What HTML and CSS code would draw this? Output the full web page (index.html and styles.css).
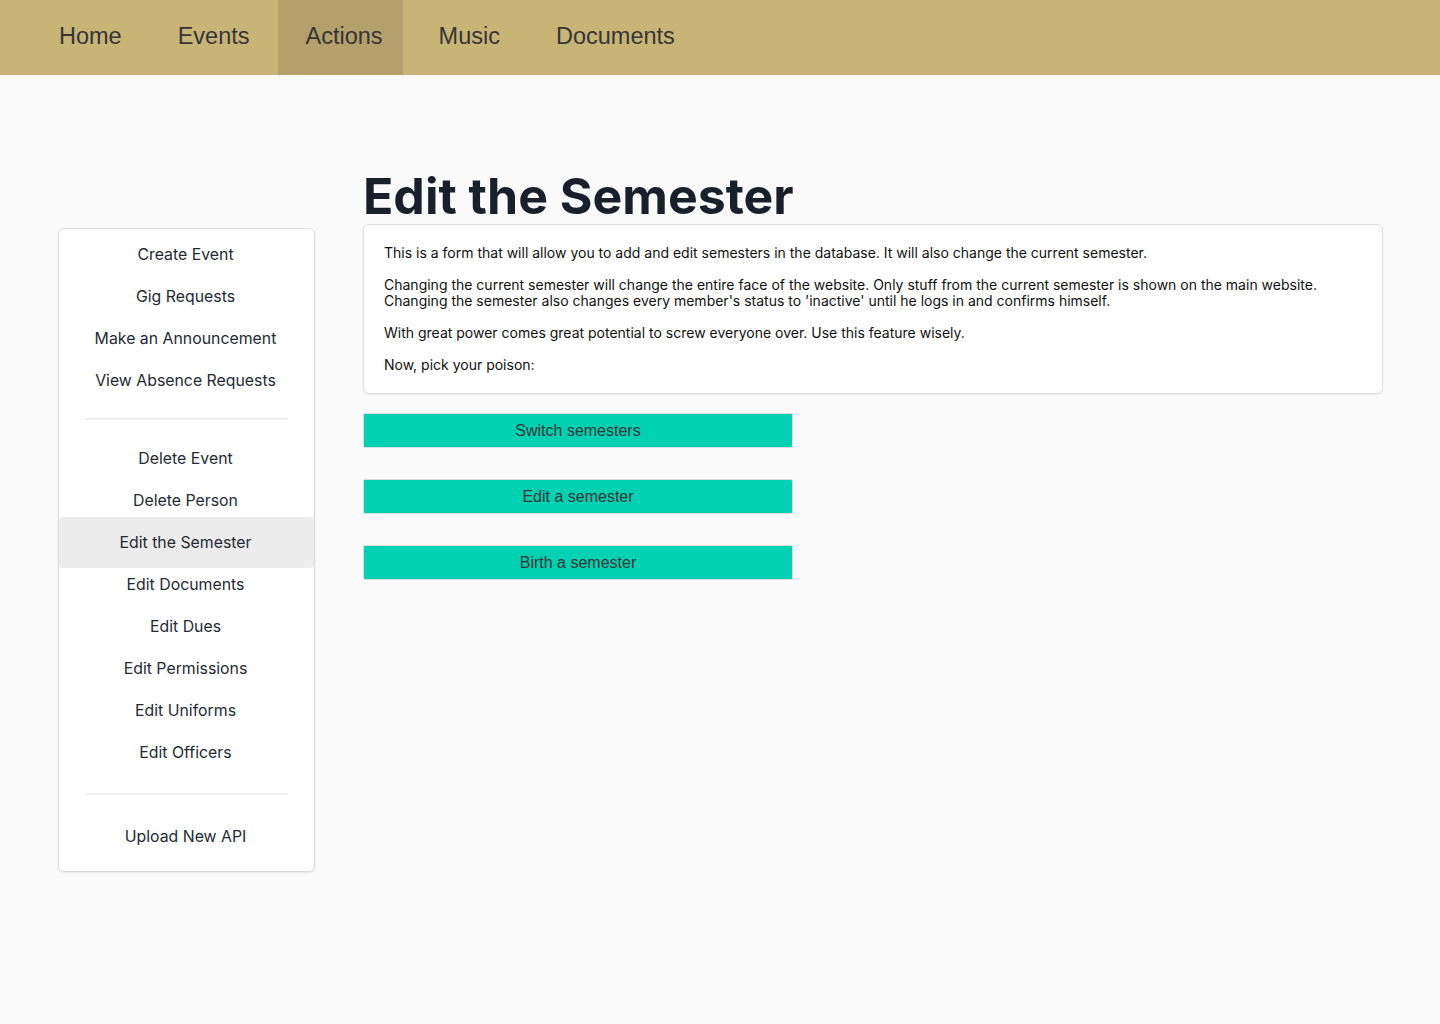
FILE: index.html
```html
<!DOCTYPE html>
<html>
<head>
<meta charset="utf-8">
<link rel="stylesheet" href="styles.css">
</head>
<body>
<nav class="navbar">
  <a class="nav-item">Home</a>
  <a class="nav-item">Events</a>
  <a class="nav-item active">Actions</a>
  <a class="nav-item">Music</a>
  <a class="nav-item">Documents</a>
</nav>
<div class="page">
  <aside class="sidebar">
    <a class="side-item">Create Event</a>
    <a class="side-item">Gig Requests</a>
    <a class="side-item">Make an Announcement</a>
    <a class="side-item">View Absence Requests</a>
    <hr class="divider first">
    <a class="side-item">Delete Event</a>
    <a class="side-item">Delete Person</a>
    <a class="side-item active">Edit the Semester</a>
    <a class="side-item">Edit Documents</a>
    <a class="side-item">Edit Dues</a>
    <a class="side-item">Edit Permissions</a>
    <a class="side-item">Edit Uniforms</a>
    <a class="side-item">Edit Officers</a>
    <hr class="divider second">
    <a class="side-item">Upload New API</a>
  </aside>
  <main class="main">
    <h1 class="title">Edit the Semester</h1>
    <div class="box">
      <p>This is a form that will allow you to add and edit semesters in the database. It will also change the current semester.</p>
      <p>Changing the current semester will change the entire face of the website. Only stuff from the current semester is shown on the main website.<br>Changing the semester also changes every member's status to 'inactive' until he logs in and confirms himself.</p>
      <p>With great power comes great potential to screw everyone over. Use this feature wisely.</p>
      <p>Now, pick your poison:</p>
    </div>
    <div class="buttons">
      <button class="btn">Switch semesters</button>
      <button class="btn">Edit a semester</button>
      <button class="btn">Birth a semester</button>
    </div>
  </main>
</div>
</body>
</html>
```

FILE: styles.css
```css
* { box-sizing: border-box; }
html, body { margin: 0; padding: 0; }
body {
  background: #fafafa;
  font-family: Inter, "Noto Sans", sans-serif;
  color: #242a33;
  min-height: 1024px;
}
.navbar {
  height: 75px;
  background: #c8b477;
  display: flex;
  align-items: stretch;
  padding-left: 31px;
}
.nav-item {
  display: flex;
  align-items: center;
  padding: 0 28px 2px;
  font-family: "Liberation Sans", Arial, sans-serif;
  font-size: 23.5px;
  color: #363636;
  text-decoration: none;
}
.nav-item.active {
  background: #b3a06a;
  padding-right: 20px;
  margin-right: 8px;
}
.page {
  display: flex;
  align-items: flex-start;
  gap: 48px;
  padding: 0 57px 0 58px;
}
.sidebar {
  width: 257px;
  flex: none;
  margin-top: 153px;
  background: #fff;
  border: 1px solid #dcdcdc;
  border-radius: 6px;
  box-shadow: 0 1px 2px rgba(0,0,0,0.08);
  padding: 4px 0 14px;
  display: flex;
  flex-direction: column;
}
.side-item {
  height: 42px;
  display: flex;
  align-items: center;
  justify-content: center;
  font-size: 15.85px;
  color: #242a33;
  padding-right: 2px;
}
.side-item.active {
  background: #ececec;
  height: 51px;
  margin: -4px 0 -5px;
  border-radius: 4px;
}
.divider {
  border: none;
  height: 2px;
  background: #f0f0f0;
  margin: 17px 26px;
}
.divider.second { margin: 20px 26px; }
.main { flex: 1; min-width: 0; }
.title {
  margin: 93px 0 0;
  font-size: 50px;
  font-weight: 700;
  line-height: 57px;
  color: #17202b;
}
.box {
  margin-top: -1px;
  background: #fff;
  border: 1px solid #dedede;
  border-radius: 6px;
  box-shadow: 0 1px 2px rgba(0,0,0,0.06);
  padding: 20px 20px 20px;
  font-size: 14px;
  line-height: 16px;
  color: #111;
}
.box p { margin: 0 0 16px; }
.box p:last-child { margin-bottom: 0; }
.buttons {
  margin-top: 19px;
  display: flex;
  flex-direction: column;
  gap: 31px;
  align-items: flex-start;
}
.btn {
  width: 430px;
  height: 35px;
  background: #00d1b2;
  border: 1px solid #dbdbdb;
  border-radius: 2px;
  font-family: "Liberation Sans", Arial, sans-serif;
  font-size: 16px;
  color: #363636;
  padding: 0;
}
```
